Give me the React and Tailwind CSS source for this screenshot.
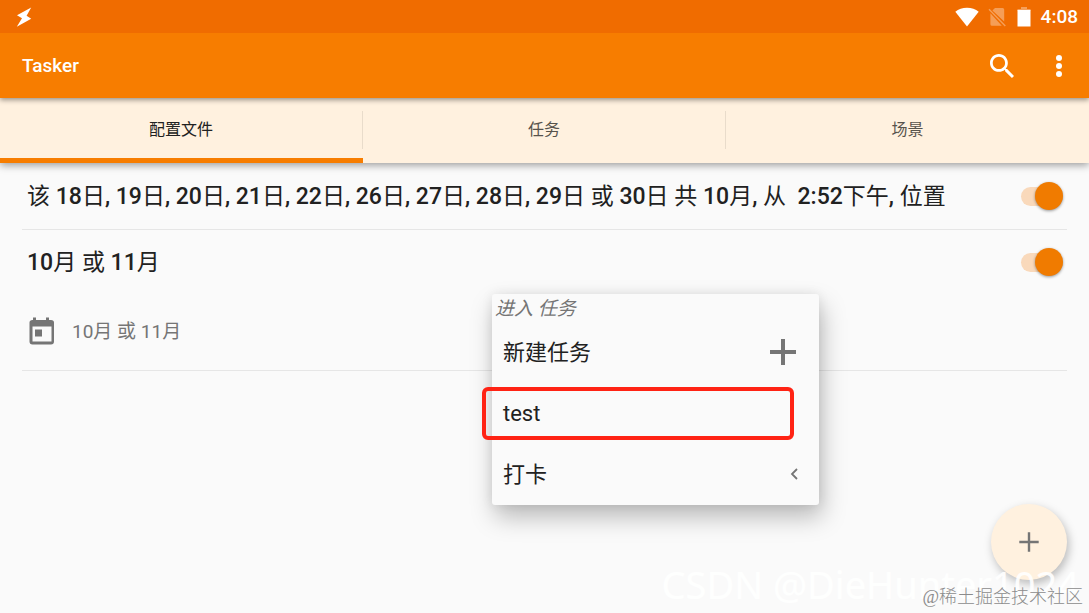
import React from 'react';

const tabs = [
  { label: '配置文件', active: true },
  { label: '任务', active: false },
  { label: '场景', active: false },
];

function StatusBar() {
  return (
    <div className="relative z-30 flex h-[33px] items-center justify-between bg-[#f06c00] pl-4 pr-[11px] text-white">
      <svg viewBox="0 0 16 20" className="h-5 w-4" fill="currentColor" aria-hidden="true">
        <path d="M15.2 0.6 1 8.2 6 11.2 0.8 19.8 15.2 11.8 10.6 8.8Z" />
      </svg>
      <div className="flex items-center">
        <svg viewBox="0 0 24 20" className="h-5 w-6" fill="currentColor" aria-hidden="true">
          <path d="M12 19.4 0.3 4.7C3.5 2.3 7.4 0.8 12 0.8s8.5 1.5 11.7 3.9Z" />
        </svg>
        <svg viewBox="0 0 20 20" className="ml-2 h-5 w-5" fill="currentColor" opacity="0.34" aria-hidden="true">
          <path d="M8 1h7.600q1.600 0 1.600 1.600V14.600L5.400 3.600ZM3.400 6.200 14.800 18.800H5q-1.600 0-1.600-1.600Z" />
          <path d="M1.500 2.800 2.500 1.800 18.800 18.400 17.800 19.400Z" />
        </svg>
        <svg viewBox="0 0 14 20" className="ml-2.5 h-5 w-3.5" fill="currentColor" aria-hidden="true">
          <path d="M4 0h6v2h3.5v2H0.5V2H4Z" opacity="0.35" />
          <path d="M0.5 3h13v16.5H0.5Z" />
        </svg>
        <span className="ml-2.5 text-[19px] font-medium leading-6">4:08</span>
      </div>
    </div>
  );
}

function AppBar() {
  return (
    <header className="relative z-20 flex h-[65px] items-center justify-between bg-[#f77d00] pl-[22px] pr-[18px] text-white shadow-[0_2px_5px_rgba(0,0,0,0.4)]">
      <h1 className="text-[19px] font-medium leading-6">Tasker</h1>
      <div className="flex items-center gap-[33px]">
        <button type="button" aria-label="搜索">
          <svg viewBox="3 3 17.49 17.49" className="size-6" fill="currentColor">
            <path d="M15.5 14h-.79l-.28-.27C15.41 12.59 16 11.11 16 9.5 16 5.91 13.09 3 9.5 3S3 5.91 3 9.5 5.91 16 9.5 16c1.61 0 3.09-.59 4.23-1.57l.27.28v.79l5 4.99L20.49 19l-4.99-5zm-6 0C7.01 14 5 11.99 5 9.5S7.01 5 9.5 5 14 7.01 14 9.5 11.99 14 9.5 14z" />
          </svg>
        </button>
        <button type="button" aria-label="更多选项" className="flex w-6 justify-center">
          <svg viewBox="0 0 6 22" className="h-[22px] w-1.5" fill="currentColor">
            <circle cx="3" cy="3" r="3" />
            <circle cx="3" cy="11" r="3" />
            <circle cx="3" cy="19" r="3" />
          </svg>
        </button>
      </div>
    </header>
  );
}

function TabBar() {
  return (
    <nav className="relative z-10 grid h-[65px] grid-cols-3 bg-[#fff1df] shadow-[0_2px_8px_rgba(0,0,0,0.4)]">
      {tabs.map((tab, i) => (
        <button
          key={tab.label}
          type="button"
          className={
            tab.active
              ? 'flex flex-col text-base text-[#212121]'
              : 'flex flex-col text-base text-[#57534c]'
          }
        >
          <span className="flex w-full flex-1 items-center pt-1">
            <span className="flex-1">{tab.label}</span>
            {i < tabs.length - 1 && <span className="h-[38px] w-px bg-[#e9dccb]" />}
          </span>
          <span className={tab.active ? 'h-[5px] w-full bg-[#f77d00]' : 'h-[5px] w-full'} />
        </button>
      ))}
    </nav>
  );
}

function Switch({ label }) {
  return (
    <input
      type="checkbox"
      role="switch"
      defaultChecked
      aria-label={label}
      className="mr-1 flex h-[19px] w-[42px] shrink-0 appearance-none items-center justify-end rounded-full bg-[#f9d9bb] before:size-7 before:rounded-full before:bg-[#f07b00] before:shadow-[0_1px_3px_rgba(0,0,0,0.4)]"
    />
  );
}

// Latin digits are medium, the CJK glyphs stay regular
function Title({ text }) {
  return (
    <h2 className="whitespace-pre pt-0.5 text-[23px] leading-8 text-[#212121]">
      {text.split(/([0-9:, ]+)/).map((part, i) => (
        <span key={i} className={i % 2 ? 'font-medium' : 'font-normal'}>
          {part}
        </span>
      ))}
    </h2>
  );
}

function ProfileList() {
  return (
    <main className="px-[22px]">
      <section className="flex h-[67px] items-center justify-between border-b border-[#e6e6e6] pl-[5px]">
        <Title text="该 18日, 19日, 20日, 21日, 22日, 26日, 27日, 28日, 29日 或 30日 共 10月, 从  2:52下午, 位置" />
        <Switch label="位置" />
      </section>
      <section className="border-b border-[#e6e6e6] pl-[5px]">
        <div className="flex h-16 items-center justify-between">
          <Title text="10月 或 11月" />
          <Switch label="10月 或 11月" />
        </div>
        <div className="flex h-[76px] items-center gap-[17px] pb-0.5 text-[#757575]">
          <svg viewBox="0 0 28 28" className="size-7" fill="currentColor" aria-hidden="true">
            <path d="M6 0.5h3V3h10V0.5h3V3h2q3 0 3 2.500v19Q27 27.500 24 27.500H5.500Q2.500 27.500 2.500 24.500v-19Q2.500 3 5.500 3H6ZM5.500 9.500v15h19v-15Z" />
            <path d="M8 12.500h7v7H8Z" />
          </svg>
          <p className="pt-0.5 text-[19px] leading-7">10月 或 11月</p>
        </div>
      </section>
    </main>
  );
}

function TaskMenu() {
  return (
    <div className="absolute left-[492px] top-[294px] z-40 h-[211px] w-[327px] rounded-[3px] bg-[#fafafa] text-[22px] text-[#212121] shadow-[3px_12px_24px_rgba(0,0,0,0.26),0_0_12px_rgba(0,0,0,0.08)]">
      <p className="h-7 pl-[3px] text-[19px] italic leading-[30px] text-[#757575]">进入 任务</p>
      <button type="button" className="flex h-[60px] w-full items-center justify-between pl-[11px] pr-[22px]">
        新建任务
        <svg viewBox="0 0 28 28" className="size-7" fill="#757575" aria-hidden="true">
          <path d="M12 1h4v11h11v4H16v11h-4V16H1v-4h11Z" />
        </svg>
      </button>
      <button type="button" className="flex h-[62px] w-full items-center pl-[11px]">
        test
      </button>
      <button type="button" className="flex h-[60px] w-full items-center justify-between pl-[11px] pr-[21px]">
        打卡
        <svg viewBox="0 0 8 12" className="h-3 w-2" fill="none" stroke="#757575" strokeWidth="1.8" aria-hidden="true">
          <path d="M7 1 2 6l5 5" />
        </svg>
      </button>
      <div className="pointer-events-none absolute -left-[10px] top-[93px] h-[53px] w-[312px] rounded-[6px] border-4 border-[#ff2314]" />
    </div>
  );
}

export default function App() {
  return (
    <div className="relative min-h-screen overflow-hidden bg-[#fafafa] font-['Roboto','Noto_Sans_CJK_SC',sans-serif]">
      <StatusBar />
      <AppBar />
      <TabBar />
      <ProfileList />
      <TaskMenu />
      <button
        type="button"
        aria-label="添加"
        className="absolute bottom-[33px] right-[22px] flex size-[76px] items-center justify-center rounded-full bg-[#fff1df] shadow-[2px_4px_10px_rgba(0,0,0,0.26)]"
      >
        <svg viewBox="0 0 20 20" className="size-5" fill="#757575">
          <path d="M8.800 0.300h2.400v8.500h8.500v2.400h-8.500v8.500H8.800v-8.500H0.300V8.800h8.500Z" />
        </svg>
      </button>
      <p className="absolute bottom-[3px] right-[10px] whitespace-nowrap font-['Noto_Sans',sans-serif] text-[38px] leading-[52px] text-white/90">
        CSDN @DieHunter1024
      </p>
      <p className="absolute bottom-[4px] right-[6px] whitespace-nowrap font-['Liberation_Serif','Noto_Sans_CJK_SC',serif] text-[18px] font-light leading-6 text-[#8c8c8c]">
        @稀土掘金技术社区
      </p>
    </div>
  );
}
